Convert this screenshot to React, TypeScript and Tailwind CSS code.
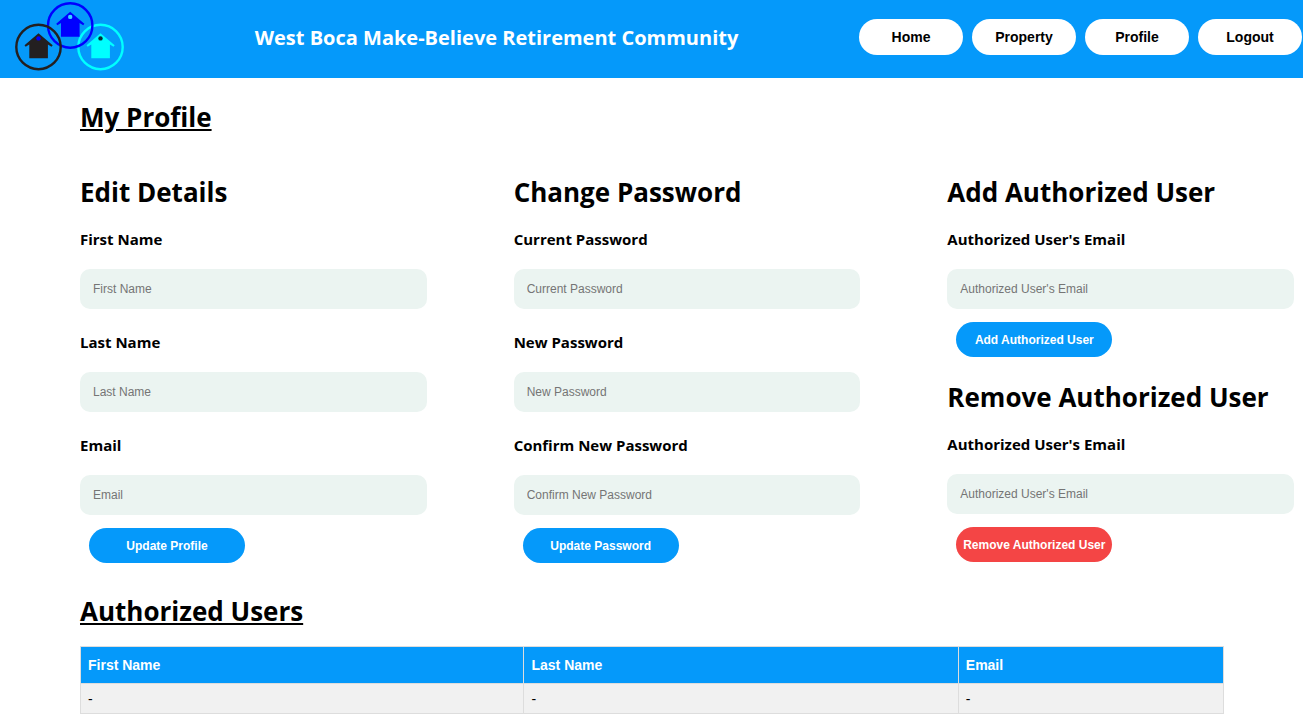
import type { ReactNode } from "react";

const headingFont = "font-['Open_Sans','Noto_Sans',sans-serif]";

function House({ x, y, color, dot }: { x: number; y: number; color: string; dot: string }) {
  return (
    <g transform={`translate(${x} ${y})`}>
      <circle r="22.2" fill="none" stroke={color} strokeWidth="2.4" />
      <path
        d="M0 -13.8 L14.2 -1.8 L13 -0.2 L9.4 -2.4 V11.3 H-9.2 V-2.4 L-12.8 -0.2 L-14 -1.8 Z"
        fill={color}
      />
      <circle cy="-8.6" r="2.2" fill={dot} />
    </g>
  );
}

function Logo() {
  return (
    <svg viewBox="0 0 112 72" className="h-18 w-28 shrink-0" role="img" aria-label="Community logo">
      <House x={86.5} y={47} color="#00ffff" dot="#0a2a3a" />
      <House x={56.2} y={25.5} color="#0000ff" dot="#35d8ff" />
      <House x={24.5} y={47} color="#231f20" dot="#0000ff" />
    </svg>
  );
}

function NavLink({ children }: { children: ReactNode }) {
  return (
    <a
      href="#"
      className="flex h-9 w-26 items-center justify-center rounded-[18px] bg-white text-sm font-bold text-black"
    >
      {children}
    </a>
  );
}

function SectionTitle({ children }: { children: ReactNode }) {
  return <h2 className={`${headingFont} text-[26px] leading-9 font-bold whitespace-nowrap`}>{children}</h2>;
}

function Field({ id, label, type = "text" }: { id: string; label: string; type?: string }) {
  return (
    <div>
      <label htmlFor={id} className={`${headingFont} block text-[15px] leading-6 font-bold`}>
        {label}
      </label>
      <input
        id={id}
        type={type}
        placeholder={label}
        className="mt-[18px] block h-10 w-full rounded-[10px] bg-[#ebf4f1] px-[13px] text-xs text-black outline-none placeholder:text-[#757575]"
      />
    </div>
  );
}

function ActionButton({ children, danger = false }: { children: ReactNode; danger?: boolean }) {
  return (
    <button
      type="submit"
      className={`mt-[13px] ml-[9px] block h-[35px] w-39 rounded-[18px] text-xs font-bold whitespace-nowrap text-white ${
        danger ? "bg-[#f44545]" : "bg-[#0599fa]"
      }`}
    >
      {children}
    </button>
  );
}

export default function App() {
  return (
    <div className="min-h-screen bg-white font-['Liberation_Sans',Arial,sans-serif] text-black">
      <header className="flex items-start justify-between bg-[#0599fa] pr-px pb-1.5 pl-3.5">
        <Logo />
        <h1 className={`${headingFont} pt-6 pl-2 text-xl leading-7 font-bold text-white`}>
          West Boca Make-Believe Retirement Community
        </h1>
        <nav className="flex gap-[9px] pt-[19px]">
          <NavLink>Home</NavLink>
          <NavLink>Property</NavLink>
          <NavLink>Profile</NavLink>
          <NavLink>Logout</NavLink>
        </nav>
      </header>

      <main className="pt-[21px] pb-3 pl-20">
        <h2 className={`${headingFont} text-[26px] leading-9 font-bold underline`}>My Profile</h2>

        <div className="mt-[39px] grid grid-cols-3 gap-[87px] pr-[9px]">
          <form>
            <SectionTitle>Edit Details</SectionTitle>
            <div className="mt-[17px] flex flex-col gap-[21px]">
              <Field id="first-name" label="First Name" />
              <Field id="last-name" label="Last Name" />
              <Field id="email" label="Email" type="email" />
            </div>
            <ActionButton>Update Profile</ActionButton>
          </form>

          <form>
            <SectionTitle>Change Password</SectionTitle>
            <div className="mt-[17px] flex flex-col gap-[21px]">
              <Field id="current-password" label="Current Password" type="password" />
              <Field id="new-password" label="New Password" type="password" />
              <Field id="confirm-password" label="Confirm New Password" type="password" />
            </div>
            <ActionButton>Update Password</ActionButton>
          </form>

          <div className="flex flex-col gap-[22px]">
            <form>
              <SectionTitle>Add Authorized User</SectionTitle>
              <div className="mt-[17px]">
                <Field id="add-user-email" label="Authorized User's Email" type="email" />
              </div>
              <ActionButton>Add Authorized User</ActionButton>
            </form>
            <form>
              <SectionTitle>Remove Authorized User</SectionTitle>
              <div className="mt-[17px]">
                <Field id="remove-user-email" label="Authorized User's Email" type="email" />
              </div>
              <ActionButton danger>Remove Authorized User</ActionButton>
            </form>
          </div>
        </div>

        <h2 className={`${headingFont} mt-[30px] text-[26px] leading-9 font-bold underline`}>Authorized Users</h2>

        <div className="mt-[17px] pr-[79px]">
          <table className="w-full table-fixed border-collapse text-left">
            <thead>
              <tr className="h-[37px] bg-[#0599fa] text-sm text-white">
                <th className="w-[38.8%] border border-[#dddddd] px-[7px] pb-px font-bold">First Name</th>
                <th className="w-[38%] border border-[#dddddd] px-[7px] pb-px font-bold">Last Name</th>
                <th className="border border-[#dddddd] px-[7px] pb-px font-bold">Email</th>
              </tr>
            </thead>
            <tbody>
              <tr className="h-[30px] bg-[#f1f1f1] text-sm">
                <td className="border border-[#dddddd] px-[7px]">-</td>
                <td className="border border-[#dddddd] px-[7px]">-</td>
                <td className="border border-[#dddddd] px-[7px]">-</td>
              </tr>
            </tbody>
          </table>
        </div>
      </main>
    </div>
  );
}
